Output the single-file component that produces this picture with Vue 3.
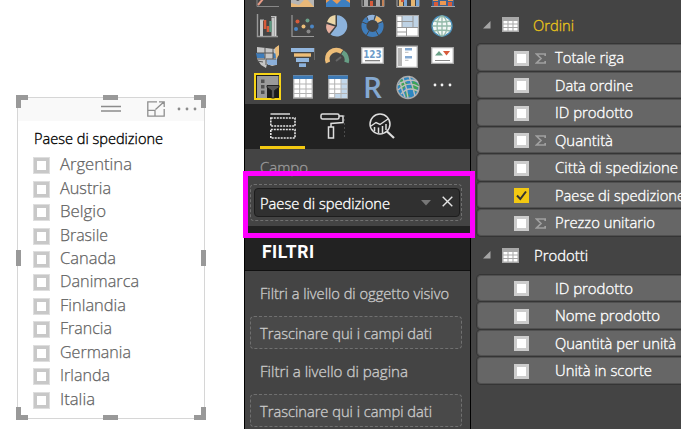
<script setup>
const countries = [
  ['Argentina', 72], ['Austria', 51], ['Belgio', 46], ['Brasile', 48], ['Canada', 56], ['Danimarca', 79],
  ['Finlandia', 66], ['Francia', 52], ['Germania', 71], ['Irlanda', 50], ['Italia', 35],
].map(([name, width]) => ({ name, width }))

const tables = [
  {
    name: 'Ordini', width: 41, active: true,
    fields: [
      { name: 'Totale riga', width: 69, sum: true },
      { name: 'Data ordine', width: 78 },
      { name: 'ID prodotto', width: 78 },
      { name: 'Quantità', width: 58, sum: true },
      { name: 'Città di spedizione', width: 123 },
      { name: 'Paese di spedizione', width: 130, checked: true },
      { name: 'Prezzo unitario', width: 100, sum: true },
    ],
  },
  {
    name: 'Prodotti', width: 54,
    fields: [
      { name: 'ID prodotto', width: 78 },
      { name: 'Nome prodotto', width: 105 },
      { name: 'Quantità per unità', width: 121 },
      { name: 'Unità in scorte', width: 97 },
    ],
  },
]

const filters = [
  { name: 'Filtri a livello di oggetto visivo', width: 189 },
  { name: 'Filtri a livello di pagina', width: 148 },
]
const handles = ['tl', 'tm', 'tr', 'ml', 'mr', 'bl', 'bm', 'br']
</script>

<template>
  <div class="screen">
    <section class="canvas">
      <div class="slicer">
        <header class="slicer-bar">
          <svg class="grip" width="20" height="8"><path d="M0 1.5H20M0 6H20" stroke="#8c8c8c" stroke-width="1.4" /></svg>
          <svg class="focus" width="18" height="16" fill="none" stroke="#8f8f8f" stroke-width="1.3"><path d="M10 .8H.8V15.2H17.2V8M.8 9.3H8V15M8.5 8.5L16.5 1.2M12 .8H17.2V6" /></svg>
          <svg class="more" width="20" height="4" fill="#8c8c8c"><circle cx="2" cy="2" r="1.4" /><circle cx="10" cy="2" r="1.4" /><circle cx="18" cy="2" r="1.4" /></svg>
        </header>
        <svg class="label title" width="130" height="20"><text y="15" textLength="129" lengthAdjust="spacingAndGlyphs">Paese di spedizione</text></svg>
        <ul class="options">
          <li v-for="c in countries" :key="c.name">
            <span class="box"></span>
            <svg class="label option" width="100" height="22"><text y="16" :textLength="c.width" lengthAdjust="spacingAndGlyphs">{{ c.name }}</text></svg>
          </li>
        </ul>
        <i v-for="h in handles" :key="h" class="handle" :class="h"></i>
      </div>
    </section>

    <section class="visuals">
      <div class="gallery">
        <!-- partially scrolled row -->
        <svg viewBox="0 0 24 24"><path d="M1 0V23.5H23" stroke="#888" fill="none" /><path d="M2 22L7 16" stroke="#e79b86" stroke-width="2" /></svg>
        <svg viewBox="0 0 24 24"><path d="M0 24V15L7 18L12 15H23V24Z" fill="#b5b5b5" /><path d="M0 24V20L8 22L15 15L23 24Z" fill="#e9b878" /></svg>
        <svg viewBox="0 0 24 24"><path d="M0 24V14H24V24Z" fill="#e99b54" /><path d="M0 24V20L5 16L11 21L17 15L24 20V24Z" fill="#3d7fc1" /></svg>
        <svg viewBox="0 0 24 24"><path d="M1 0V23.5H23V0" stroke="#999" fill="none" /><path d="M3 14H7V23H3ZM15 14H19V23H15Z" fill="#aaa" /><path d="M9 18H12V23H9Z" fill="#d75b3b" /><path d="M21 10H23V23H21Z" fill="#c38359" /></svg>
        <svg viewBox="0 0 24 24"><path d="M1 0V23.5H23V0" stroke="#aaa" fill="none" /><path d="M3 14H7V23H3ZM15 17H19V23H15Z" fill="#e6b570" /><path d="M8 17H11V23H8ZM20 14H23V23H20Z" fill="#7aa6d6" /><path d="M5 14H8V19H5Z" fill="#ce553a" /></svg>
        <svg viewBox="0 0 24 24"><path d="M1 14H23V23H1Z" fill="#3f6291" /><path d="M2 14H7V18H2ZM9 18H15V22H9ZM17 14H22V18H17Z" fill="#ed9851" /><path d="M3 19H7V23H3ZM17 19H21V23H17Z" fill="#d75b3b" /><path d="M0 23.5H24" stroke="#aaa" /></svg>

        <!-- waterfall -->
        <svg viewBox="0 0 24 24"><path d="M1.5 0V22.5H22" stroke="#999" stroke-width="1.4" fill="none" /><path d="M5.5 22V6M17 22V3.5" stroke="#c7c7c7" stroke-width="3" /><path d="M9 6V15M12 12V18" stroke="#d75b3b" stroke-width="2.6" /><path d="M14.5 7V18" stroke="#5f9a83" stroke-width="2.4" /><path d="M19.5 2V22" stroke="#d9d9d9" stroke-width="1.8" /><path d="M4 6H8M15 2.5H20" stroke="#bbb" /></svg>
        <!-- scatter -->
        <svg viewBox="0 0 24 24"><path d="M1 1V22.5H23" stroke="#999" stroke-width="1.2" fill="none" /><circle cx="6.5" cy="7.5" r="2" fill="#d75b3b" /><circle cx="16.5" cy="6.5" r="2" fill="#6a9f88" /><circle cx="5" cy="15" r="2" fill="#4b86c4" /><circle cx="12.5" cy="12.5" r="2" fill="#edbf79" /><circle cx="21" cy="12.5" r="2" fill="#4b86c4" /><circle cx="17.5" cy="17.5" r="2" fill="#888" /></svg>
        <!-- pie -->
        <svg viewBox="0 0 24 24"><path d="M11 12V1.3A10.6 10.6 0 1 1 4.5 20.5Z" fill="#8db3dc" /><path d="M9.5 11V1A10 10 0 0 0 1 8Z" fill="#ecd7a8" /><path d="M9 12.5L.5 10A10 10 0 0 0 3 19.5Z" fill="#e7b0a0" /></svg>
        <!-- donut -->
        <svg viewBox="0 0 24 24" fill="none" stroke-width="5"><circle cx="11.5" cy="12" r="8.6" stroke="#3f7dbb" /><path d="M6.5 5A8.6 8.6 0 0 1 13.5 3.6" stroke="#8fb2dc" /><path d="M14.5 4A8.6 8.6 0 0 1 19 7.8" stroke="#edbb73" /><path d="M5 1L7 6M14.5 1L13 6M23 7L17 9.5M1 8L6 10M5 22L8 17M18 22L15 17" stroke="#454545" stroke-width="1" /></svg>
        <!-- treemap -->
        <svg viewBox="0 0 24 24"><path d="M.7 1.7H22.3V22.3H.7Z" fill="#fff" stroke="#aaa" stroke-width="1.4" /><path d="M6 2H22V13H6Z" fill="#bed2e4" /><path d="M1 13.5H22M6 2V13.5M17 2V13.5M1 7.5H17M10.5 13.5V22M1 18H10.5" stroke="#999" fill="none" /></svg>
        <!-- map globe -->
        <svg viewBox="0 0 24 24" fill="none"><circle cx="11" cy="12" r="10" fill="#f2f7f5" stroke="#4c91ba" stroke-width="1.4" /><path d="M11 2V22M1.5 12H20.5M3 7Q11 9 19 7M3 17Q11 15 19 17" stroke="#93b9a8" stroke-width="1.3" /><ellipse cx="11" cy="12" rx="5" ry="10" stroke="#93b9a8" stroke-width="1.3" /></svg>

        <!-- filled map -->
        <svg viewBox="0 0 24 24"><path d="M1 2L10 3L18 4L22 1V9L20 20L16 21L11 19L10 23L5 20L1 14Z" fill="#c5c5c5" /><path d="M0 8L8 8L9 13L1 13ZM17 8L22 9L20 13L17 13Z" fill="#3f7dbb" /><path d="M10 15L21 14L21 20L12 20Z" fill="#8bafd9" /><path d="M19 3L23 0V10L20 14Z" fill="#e9bc7b" /><path d="M1 8H18M9 3V14H1M10 14H20M17 4V14M10 14V20M1 16L7 17" stroke="#555" fill="none" /></svg>
        <!-- funnel -->
        <svg viewBox="0 0 24 24"><path d="M0 3H23V7H0Z" fill="#93b7df" /><path d="M3 8.3H20V11.7H3Z" fill="#edbd78" /><path d="M5 13H18V17H5Z" fill="#93b7df" /><path d="M8 18.3H15V22H8Z" fill="#8bb1db" /><path d="M23.5 3V15" stroke="#777" stroke-width=".7" /></svg>
        <!-- gauge -->
        <svg viewBox="0 0 24 24" fill="none" stroke-width="4.6"><path d="M2 17.5A9 9 0 0 1 15.8 6.9" stroke="#edbd78" /><path d="M16.5 7.3A9 9 0 0 1 20.5 17.5" stroke="#679e85" /><path d="M10 16L15 12" stroke="#666" stroke-width="2" /></svg>
        <!-- card -->
        <svg viewBox="0 0 24 24"><path d="M.7 2.7H22.3V18.3H.7Z" fill="#fff" stroke="#aaa" stroke-width="1.3" /><text x="2.2" y="12.5" font-family="DejaVu Sans" font-size="10" font-weight="bold" fill="#6e9cc9" textLength="18.5" lengthAdjust="spacingAndGlyphs">123</text><path d="M4 15.7H19" stroke="#777" stroke-width="1.2" /></svg>
        <!-- multi-row card -->
        <svg viewBox="0 0 24 24"><path d="M.7 1.2H21.3V22.3H.7Z" fill="#fff" stroke="#aaa" stroke-width="1.3" /><path d="M2 3H6V21H2Z" fill="#b5b5b5" /><path d="M9 4.3H16M9 12.3H16" stroke="#83a9d2" stroke-width="2.5" /><path d="M9 7.3H12.5M9 15.3H12.5" stroke="#bbb" /></svg>
        <!-- KPI -->
        <svg viewBox="0 0 24 24"><path d="M.7 2.7H22.3V18.3H.7Z" fill="#fff" stroke="#aaa" stroke-width="1.3" /><path d="M4 10.5L8 6L12 10.5Z" fill="#6aa087" /><path d="M12 6H19L15.5 10.5Z" fill="#d75b3b" /><path d="M4 15.5H19" stroke="#888" /></svg>

        <!-- slicer, selected -->
        <svg viewBox="0 0 24 24"><path d="M-1 -2H24V23H-1Z" fill="#1c1c1c" stroke="#f7d417" stroke-width="2" /><path d="M1 0H22.5V9.5H11V22H1Z" fill="#9a9a9a" /><path d="M5 3.5H8.5V7H5ZM5 9H8.5V12.5H5ZM5 14.5H8.5V18H5Z" fill="#505050" /><path d="M11 9.5H23V11.5L18.5 14.5V22H15.5V14.5L11 11.5Z" fill="#585858" stroke="#222" /></svg>
        <!-- table -->
        <svg viewBox="0 0 24 24"><path d="M2.7 0H21.3V22H2.7Z" fill="#fff" stroke="#aaa" stroke-width="1.3" /><path d="M2 -.5H22V3H2Z" fill="#3d7ab6" /><path d="M8.7 3V22M15 3V22M3 8H21M3 13H21M3 17.5H21" stroke="#b3b3b3" /></svg>
        <!-- matrix -->
        <svg viewBox="0 0 24 24"><path d="M2.7 0H21.3V22H2.7Z" fill="#fff" stroke="#aaa" stroke-width="1.3" /><path d="M15 3H21V22H9V17.5H15Z" fill="#c2d7ea" /><path d="M2 -.5H22V3H2Z" fill="#3d7ab6" /><path d="M8.7 3V22M15 3V22M3 8H21M3 13H21M3 17.5H21" stroke="#b3b3b3" /></svg>
        <!-- R script -->
        <svg viewBox="0 0 24 24"><text x="2" y="21.5" font-family="Open Sans, sans-serif" font-size="29" font-weight="600" fill="#85a9d1" textLength="19" lengthAdjust="spacingAndGlyphs">R</text></svg>
        <!-- ArcGIS -->
        <svg viewBox="0 0 24 24" fill="none"><circle cx="12" cy="11.5" r="11" fill="#2f87c2" stroke="#aaa" stroke-width="1.4" /><path d="M5 3L12 8L6 14L3 9ZM17 4L23 9L20 16L15 13ZM9 14L14 20L10 21Z" fill="#3fa455" /><path d="M2 9Q13 1 22 6M2 14Q12 4 23 11M5 18Q12 10 22 15M7 2Q11 12 12 22M13 0Q17 11 19 20M4 6Q6 15 9 21" stroke="#bdbdbd" stroke-width="1.4" /></svg>
        <svg viewBox="0 0 24 24" fill="#f4f4f4"><circle cx="4" cy="9" r="1.4" /><circle cx="11" cy="9" r="1.4" /><circle cx="19" cy="9" r="1.4" /></svg>
      </div>

      <nav class="tabs">
        <span class="tab on"><svg width="26" height="26" fill="none" stroke="#e8e8e8"><path d="M.5 1H20" stroke="#aaa" stroke-width="2" /><path d="M.8 5H25V13H.8ZM.8 16.5H25V25H.8Z" stroke-width="1.6" stroke-dasharray="2 1" /></svg></span>
        <span class="tab"><svg width="26" height="26" fill="none" stroke="#dedede" stroke-width="1.5"><rect x="1" y="1" width="18" height="5" rx="1.5" /><path d="M19 3H23V9.5L11 10.5V14M8.5 14H13.5V25H8.5Z" /><path d="M24.5 2V25" stroke="#555" stroke-width=".8" stroke-dasharray="2 2" /></svg></span>
        <span class="tab"><svg width="26" height="26" fill="none" stroke="#dedede" stroke-width="1.5"><circle cx="11" cy="11" r="10" /><path d="M17.5 18L25 25" stroke-width="2.2" /><path d="M2 13L7 9.5L11 11.5L19 6M5.5 14V18M9.5 14.5V20M13.5 13V20M17 11V17" /></svg></span>
      </nav>

      <div class="field-area">
        <svg class="label muted" width="60" height="24"><text y="20" textLength="48" lengthAdjust="spacingAndGlyphs">Campo</text></svg>
        <div class="well">
          <div class="chip">
            <svg class="label" width="140" height="24"><text y="18" textLength="130" lengthAdjust="spacingAndGlyphs">Paese di spedizione</text></svg>
            <svg class="caret" width="10" height="6"><path d="M0 0H10L5 5.5Z" fill="#777" /></svg>
            <svg class="close" width="11" height="11"><path d="M.7 .7L10.3 10.3M10.3 .7L.7 10.3" stroke="#e4e4e4" stroke-width="1.4" /></svg>
          </div>
        </div>
        <div class="highlight"></div>
      </div>

      <h2 class="filters-title"><svg width="60" height="22"><text y="17.5" textLength="52">FILTRI</text></svg></h2>
      <div class="filters">
        <div v-for="f in filters" :key="f.name" class="filter">
          <svg class="label soft" width="195" height="22"><text y="16" :textLength="f.width" lengthAdjust="spacingAndGlyphs">{{ f.name }}</text></svg>
          <div class="drop"><svg class="label soft" width="180" height="22"><text y="17" textLength="172" lengthAdjust="spacingAndGlyphs">Trascinare qui i campi dati</text></svg></div>
        </div>
      </div>
    </section>

    <section class="fields">
      <div v-for="t in tables" :key="t.name" class="table">
        <div class="table-head" :class="{ active: t.active }">
          <svg width="8" height="8"><path d="M7.5 0V7.5H0Z" fill="#a5a5a5" /></svg>
          <svg class="grid-icon" width="17" height="15"><rect width="17" height="15" fill="#a8a8a8" /><path d="M1.5 4H5.5V6.5H1.5ZM6.5 4H10.5V6.5H6.5ZM11.5 4H15.5V6.5H11.5ZM1.5 7.5H5.5V10H1.5ZM6.5 7.5H10.5V10H6.5ZM11.5 7.5H15.5V10H11.5ZM1.5 11H5.5V13.5H1.5ZM6.5 11H10.5V13.5H6.5ZM11.5 11H15.5V13.5H11.5Z" fill="#fff" /></svg>
          <svg class="label" width="80" height="24"><text y="18" :textLength="t.width" lengthAdjust="spacingAndGlyphs">{{ t.name }}</text></svg>
        </div>
        <div class="rows">
          <div v-for="f in t.fields" :key="f.name" class="row">
            <span class="check" :class="{ checked: f.checked }"><svg v-if="f.checked" width="15" height="15"><path d="M3 7.5L6.3 11L12 3.5" fill="none" stroke="#333" stroke-width="2" /></svg></span>
            <span class="sigma"><svg v-if="f.sum" width="11" height="11"><path d="M10.2 3V1H1.5L6 5.5L1.5 10H10.2V8" fill="none" stroke="#a0a0a0" stroke-width="1.7" /></svg></span>
            <svg class="label" width="132" height="24"><text y="18" :textLength="f.width" lengthAdjust="spacingAndGlyphs">{{ f.name }}</text></svg>
          </div>
        </div>
      </div>
    </section>
  </div>
</template>

<style>
body { margin: 0; overflow: hidden; }
</style>

<style scoped>
* { box-sizing: border-box; }
svg { display: block; flex: none; }
.screen { display: grid; grid-template-columns: 244px 227px 210px; width: 681px; height: 429px; overflow: hidden; background: #fff; font-family: "Open Sans", "Noto Sans", sans-serif; }
.label { font-size: 15.3px; font-weight: 300; color: #fff; fill: currentColor; stroke: currentColor; stroke-width: .35px; overflow: visible; }

.canvas { padding: 97px 0 0 17px; }
.slicer { position: relative; width: 188px; height: 322px; border: 1px solid #d6d6d6; }
.slicer-bar { display: flex; align-items: center; height: 23px; padding-left: 83px; background: #f9f9f9; }
.focus { margin-left: 26px; margin-top: -2px; }
.grip { margin-top: -1px; }
.more { margin-left: 12px; margin-top: -1px; }
.slicer .title { margin: 8px 0 0 16px; font-size: 14.7px; color: #000; }
.options { list-style: none; margin: 5px 0 0; padding: 0 0 0 15px; }
.options li { display: flex; align-items: center; height: 23.45px; }
.box { width: 17px; height: 17px; border: 4px solid #c8c8c8; outline: 1px solid #dedede; outline-offset: -1px; background: #fff; }
.option { margin: -1px 0 0 10px; }
.slicer .option { font-size: 16.8px; color: #626262; stroke-width: .25px; }
.handle { position: absolute; border: 0 solid #999; width: 12px; height: 13px; }
.tl { left: -2px; top: -3px; border-width: 5px 0 0 5px; }
.tr { right: -2px; top: -3px; border-width: 5px 5px 0 0; }
.bl { left: -2px; bottom: -2px; border-width: 0 0 5px 5px; }
.br { right: -2px; bottom: -2px; border-width: 0 5px 5px 0; }
.tm, .bm { left: 85px; width: 15px; height: 5px; background: #999; }
.tm { top: -3px; }
.bm { bottom: -2px; }
.ml, .mr { top: 152px; width: 5px; height: 16px; background: #999; }
.ml { left: -2px; }
.mr { right: -2px; }

.visuals { display: flex; flex-direction: column; background: #444; border: solid #000; border-width: 0 1px; min-width: 0; }
.gallery { display: grid; grid-template-columns: repeat(6, 24px); grid-auto-rows: 24px; gap: 7px 11px; align-content: end; height: 104px; padding: 0 0 4px 11px; overflow: hidden; flex: none; }
.gallery svg { width: 24px; height: 24px; overflow: visible; }
.tabs { display: flex; gap: 5px; height: 45px; flex: none; padding-left: 15px; background: #222; }
.tab { display: flex; justify-content: center; width: 45px; padding-top: 9px; border-bottom: 3px solid transparent; }
.tab:last-child { width: 44px; }
.tab.on { border-color: #f2c811; }
.field-area { position: relative; height: 77px; flex: none; padding: 4px 0 0 5px; }
.label.muted { margin-left: 10px; color: #999; }
.well { width: 212px; height: 37px; margin-top: 7px; padding: 3px; border: 1px dashed #707070; border-radius: 4px; }
.chip { display: flex; align-items: center; width: 206px; height: 29px; padding-left: 5px; border: 1px solid #1d1d1d; border-radius: 4px; background: #303030; }
.chip .caret { margin-left: 21px; margin-top: 1px; }
.chip .close { margin-left: 11px; margin-top: -2px; }
.highlight { position: absolute; left: -2px; top: 22px; width: 232px; height: 67px; border: 5px solid #f0f; z-index: 2; }
.filters-title { display: flex; align-items: center; height: 45px; flex: none; margin: 0; padding: 6px 0 0 17px; background: #222; border-bottom: 1px solid #111; }
.filters-title svg { font: 700 17.5px Roboto, sans-serif; fill: #fff; overflow: visible; }
.filters { padding: 12px 0 0 5px; }
.filter { height: 78px; }
.filter > .label { margin-left: 10px; }
.drop { display: flex; align-items: center; width: 212px; height: 33px; margin-top: 11px; padding-left: 9px; border: 1px dashed #707070; border-radius: 4px; background: #494949; }
.label.soft { color: #c9c9c9; }

.fields { background: #444; overflow: hidden; }
.table-head { display: flex; align-items: center; height: 44px; padding: 5px 0 0 12px; }
.table + .table .table-head { height: 39px; padding-top: 0; }
.grid-icon { margin: 0 15px 0 11px; }
.table-head.active .label { color: #e8c31a; margin-left: -1px; }
.rows { display: flex; flex-direction: column; gap: 1px; margin-left: 6px; }
.row { display: flex; align-items: center; height: 26.5px; padding-left: 36px; border: 1px solid #505050; border-right: 0; border-radius: 4px 0 0 4px; background: #666; box-shadow: 0 0 0 1px #353535; }
.check { width: 15px; height: 15px; flex: none; border: 3px solid #ccc; background: #fff; margin-top: 2px; }
.check.checked { border: 0; background: #f2c811; }
.sigma { width: 11px; flex: none; margin: 2px 8.5px 0 6px; }
</style>
